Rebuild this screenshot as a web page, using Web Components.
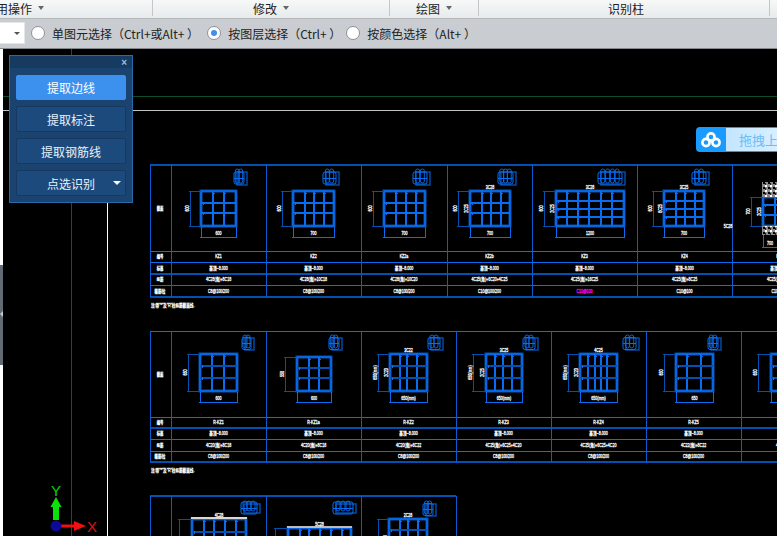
<!DOCTYPE html>
<html lang="zh">
<head>
<meta charset="utf-8">
<title>识别柱</title>
<style>
    html, body { margin: 0; height: 100%; overflow: hidden; background: #000; }
    body { font-family: "Noto Sans CJK SC", "Liberation Sans", sans-serif; }
    app-shell { height: 536px; }
</style>
</head>
<body>
<app-shell>
    <ribbon-bar>
        <ribbon-group width="153" right="124" caret>常用操作</ribbon-group>
        <ribbon-group width="237" caret>修改</ribbon-group>
        <ribbon-group width="89" caret>绘图</ribbon-group>
        <ribbon-group width="291" left="4">识别柱</ribbon-group>
    </ribbon-bar>
    <select-bar>
        <radio-option after="8">单图元选择（Ctrl+或Alt+ ）</radio-option>
        <radio-option after="5" checked>按图层选择（Ctrl+ ）</radio-option>
        <radio-option>按颜色选择（Alt+ ）</radio-option>
    </select-bar>
    <cad-canvas>
        <extract-panel slot="over">
            <panel-button active>提取边线</panel-button>
            <panel-button>提取标注</panel-button>
            <panel-button>提取钢筋线</panel-button>
            <panel-button caret>点选识别</panel-button>
        </extract-panel>
        <upload-pill slot="over">拖拽上传</upload-pill>
        <axis-gizmo slot="over"></axis-gizmo>
    </cad-canvas>
</app-shell>

<script>
class AppShell extends HTMLElement {
    constructor() {
        super();
        this.attachShadow({mode: 'open'});
        this.shadowRoot.innerHTML = `
            <style>
                :host { display: flex; flex-direction: column; width: 777px; overflow: hidden; }
            </style>
            <slot></slot>
        `;
    }
}

class RibbonBar extends HTMLElement {
    constructor() {
        super();
        this.attachShadow({mode: 'open'});
        this.shadowRoot.innerHTML = `
            <style>
                :host {
                    display: flex;
                    flex: none;
                    height: 19px;
                    background: linear-gradient(#f7f8f8, #e6eaeb);
                    box-shadow: inset 0 -1px 0 #b4b8bb;
                }
            </style>
            <slot></slot>
        `;
    }
}

class RibbonGroup extends HTMLElement {
    constructor() {
        super();
        this.attachShadow({mode: 'open'});
        const caret = this.hasAttribute('caret') ? '<i></i>' : '';
        this.shadowRoot.innerHTML = `
            <style>
                :host {
                    display: flex;
                    flex: none;
                    box-sizing: border-box;
                    align-items: center;
                    justify-content: center;
                    gap: 6px;
                    height: 16px;
                    width: ${this.getAttribute('width')}px;
                    padding-right: ${this.getAttribute('right') || 0}px;
                    padding-left: ${this.getAttribute('left') || 0}px;
                    border-right: 1px solid #c3c7c9;
                    color: #222;
                    font-size: 12px;
                    white-space: nowrap;
                }
                i {
                    width: 0;
                    height: 0;
                    border: 3.5px solid transparent;
                    border-top: 4px solid #666;
                    border-bottom: 0;
                }
            </style>
            <slot></slot>${caret}
        `;
    }
}

class SelectBar extends HTMLElement {
    constructor() {
        super();
        this.attachShadow({mode: 'open'});
        this.shadowRoot.innerHTML = `
            <style>
                :host {
                    display: flex;
                    flex: none;
                    box-sizing: border-box;
                    align-items: center;
                    height: 30px;
                    padding-bottom: 1px;
                    background: #c9ccd0;
                    border-bottom: 1px solid #85888c;
                }
                .combo {
                    position: relative;
                    flex: none;
                    box-sizing: border-box;
                    width: 25px;
                    height: 22px;
                    margin-right: 6px;
                    background: #fff;
                    border: 1px solid #e4e6e8;
                    border-left: 0;
                }
                .combo::after {
                    content: '';
                    position: absolute;
                    left: 14px;
                    top: 9px;
                    border: 3px solid transparent;
                    border-top: 3px solid #555;
                    border-bottom: 0;
                }
            </style>
            <div class="combo"></div>
            <slot></slot>
        `;
    }
}

class RadioOption extends HTMLElement {
    constructor() {
        super();
        this.attachShadow({mode: 'open'});
        const dot = this.hasAttribute('checked') ? '<b></b>' : '';
        this.shadowRoot.innerHTML = `
            <style>
                :host {
                    display: flex;
                    align-items: center;
                    gap: 7px;
                    margin-right: ${this.getAttribute('after') || 0}px;
                    color: #222;
                    font-size: 12px;
                    white-space: pre;
                }
                span {
                    display: flex;
                    flex: none;
                    box-sizing: border-box;
                    align-items: center;
                    justify-content: center;
                    width: 14px;
                    height: 14px;
                    background: #fff;
                    border: 1px solid #8f9396;
                    border-radius: 50%;
                }
                b {
                    width: 6px;
                    height: 6px;
                    background: #3f8ef0;
                    border-radius: 50%;
                }
            </style>
            <span>${dot}</span>
            <div><slot></slot></div>
        `;
    }
}

// the drawing is a free canvas: every entity sits at its own coordinates
const BLUE = '#0a6cf0';
const DARK = '#0450b0';
const RULE = '#0a5cd0';
const CJK = "'Liberation Sans','Noto Sans CJK SC',sans-serif";

function line(x1, y1, x2, y2, color = BLUE, w = 1) {
    return `<line x1="${x1}" y1="${y1}" x2="${x2}" y2="${y2}" stroke="${color}" stroke-width="${w}" shape-rendering="crispEdges"/>`;
}

// CAD text is narrow and heavy, so the glyphs are squeezed sideways
function label(x, y, text, opts = {}) {
    const rot = opts.rot ? ' rotate(-90)' : '';
    const color = opts.color || '#fff';
    return `<text transform="translate(${x} ${y})${rot} scale(.72 1)" dy="1.8" text-anchor="${opts.anchor || 'middle'}" fill="${color}"
        stroke="${color}" stroke-width="0.3" font-size="${opts.size || 5}" font-family="${CJK}">${text}</text>`;
}

function mini(x1, y1, x2, y2) {
    const midY = (y1 + y2) / 2 + 1;
    const h = Math.min(y2 - y1, 12);
    const n = Math.max(1, Math.round((x2 - x1) / 7));
    let out = `<rect x="${x1 + 3}" y="${y1 + 3}" width="${x2 - x1 - 3}" height="${y2 - y1 - 3}" fill="none" stroke="${DARK}" stroke-width="1.4"/>`;
    out += `<rect x="${x1}" y="${midY - h / 2}" width="${x2 - x1 - 3}" height="${h}" rx="2" fill="none" stroke="${BLUE}"/>`;
    out += line(x1, midY, x2 - 3, midY);
    for (let i = 1; i <= n; i++) {
        const x = x1 + i * (x2 - x1 - 3) / (n + 1);
        out += `<rect x="${x - 2}" y="${y1}" width="4" height="${y2 - y1 - 2}" rx="2" fill="none" stroke="${BLUE}" stroke-width="0.9"/>`;
    }
    return out;
}

// s: x1 x2 y1 y2 of the column section, vs hs the inner bars, dim the x of the left dimension
function section(s) {
    const base = s.base;
    let out = `<rect x="${s.x1}" y="${s.y1}" width="${s.x2 - s.x1}" height="${s.y2 - s.y1}" fill="none" stroke="${DARK}" stroke-width="3"/>`;
    out += `<rect x="${s.x1}" y="${s.y1}" width="${s.x2 - s.x1}" height="${s.y2 - s.y1}" rx="1" fill="none" stroke="${BLUE}" stroke-width="1.6"/>`;
    if (s.top) out += line(s.x1 - 1, s.y1 - 1, s.x2 + 1, s.y1 - 1, s.top, 1.5);
    for (const x of s.vs) {
        out += line(x, s.y1, x, Math.min(s.y2, 536), BLUE, 1.4);
        out += line(x - 1, s.y1 + 2, x + 2, s.y1 + 2, BLUE, 1);
    }
    for (const y of s.hs) {
        out += line(s.x1, y, s.x2, y, y % 2 ? BLUE : DARK, 1.6);
        out += line(s.x1 + 2, y - 1, s.x1 + 2, y + 2, BLUE, 1);
    }
    out += line(s.dim, s.y1, s.dim, Math.min(s.y2, 536), DARK, 1);
    out += line(s.dim - 1, s.y1, s.x1, s.y1, DARK, 1);
    out += line(s.dim - 1, s.y2, s.x1, s.y2, DARK, 1);
    if (s.y2 < 500) {
        out += line(s.x1, s.y2 + 1, s.x1, base + 1, BLUE, 1);
        out += line(s.x2, s.y2 + 1, s.x2, base + 1, BLUE, 1);
        out += line(s.x1 - 1, base, s.x2 + 1, base, BLUE, 1);
        if (s.bw) out += label((s.x1 + s.x2) / 2, base - 4, s.bw);
        out += label(s.dim - 3, (s.y1 + s.y2) / 2, s.bh, {rot: true});
    }
    if (s.topText) out += label((s.x1 + s.x2) / 2, s.y1 - 4, s.topText);
    if (s.sideText) out += label(s.x1 - 4, (s.y1 + s.y2) / 2, s.sideText, {rot: true});
    return out;
}

function table(t) {
    const [top, r1, r2, r3, r4, bottom] = t.rows;
    const right = t.right;
    let out = '';
    out += t.thin ? line(t.cols[0], top, right, top, BLUE, 1) : line(t.cols[0], top, right, top, DARK, 2);
    [r1, r2, r3, r4].forEach((y, i) => {
        out += line(t.cols[0], y, right, y, i === t.heavy ? DARK : BLUE, i === t.heavy ? 2 : 1);
    });
    out += line(t.cols[0], bottom, right, bottom, DARK, 2);
    for (const x of t.cols) out += line(x, top, x, bottom, RULE, 1);

    const heads = ['截面', '编号', '标高', '纵筋', '箍筋/拉'];
    const mids = [(top + r1) / 2, (r1 + r2) / 2, (r2 + r3) / 2, (r3 + r4) / 2, (r4 + bottom) / 2];
    heads.forEach((h, i) => { out += label(160, mids[i], h, {size: 4.6}); });

    t.data.forEach((d, i) => {
        const c = (t.cols[i + 1] + (t.cols[i + 2] || t.cols[i + 1] + 95)) / 2;
        out += label(c, mids[1], d[0]);
        out += label(c, mids[2], d[1] || '基顶~8.000');
        out += label(c, mids[3], d[2]);
        out += label(c, mids[4], d[3], {color: d[4] || '#fff'});
    });
    return out;
}

const T1 = {
    rows: [165, 251, 262, 274, 285, 297], heavy: 2, right: 787,
    cols: [150, 171, 266, 361, 447, 532, 637, 732],
    data: [
        ['KZ1', '', '4C28(角)+8C18', 'C8@100/200'],
        ['KZ2', '', '4C28(角)+10C18', 'C8@100/200'],
        ['KZ2a', '', '4C28(角)+10C20', 'C8@100/200'],
        ['KZ2b', '', '4C25(角)+6C20+4C25', 'C10@100/200'],
        ['KZ3', '', '4C25(角)+16C25', 'C10@100', '#f0f'],
        ['KZ4', '', '4C25(角)+8C25', 'C10@100'],
        ['KZ5', '', '4C25(角)+8C25', 'C10@100']
    ]
};

const T2 = {
    rows: [331, 417, 428, 439, 451, 462], heavy: 1, right: 787, thin: true,
    cols: [150, 171, 266, 361, 456, 551, 646, 741],
    data: [
        ['R-KZ1', '', '4C20(角)+8C18', 'C8@100/200'],
        ['R-KZ1a', '', '4C20(角)+8C18', 'C8@100/200'],
        ['R-KZ2', '', '4C20(角)+6C22', 'C8@100/200'],
        ['R-KZ3', '', '4C25(角)+6C25+4C20', 'C8@100/200'],
        ['R-KZ4', '', '4C25(角)+6C25+4C20', 'C8@100/200'],
        ['R-KZ5', '', '4C22(角)+8C22', 'C8@100/200'],
        ['R-KZ6', '', '4C22(角)+8C22', 'C8@100/200']
    ]
};

const ROW1 = {y1: 191, y2: 226, base: 237, hs: [203, 213]};
const ROW2 = {y1: 354, y2: 391, base: 402, hs: [366, 378]};

const SECTIONS = [
    {...ROW1, x1: 201, x2: 236, dim: 190, vs: [213, 224], bw: '600', bh: '600'},
    {...ROW1, x1: 293, x2: 334, dim: 282, vs: [305, 314, 324], bw: '700', bh: '600'},
    {...ROW1, x1: 384, x2: 425, dim: 373, vs: [396, 406, 416], bw: '700', bh: '600'},
    {...ROW1, x1: 470, x2: 510, dim: 458, vs: [482, 491, 501], bw: '700', bh: '600', topText: '3C28', sideText: '2C25'},
    {...ROW1, hs: [201, 209, 217], x1: 556, x2: 624, dim: 544, vs: [567, 578, 589, 601, 612], bw: '1200', bh: '600', topText: '3C28', sideText: '2C25'},
    {...ROW1, hs: [201, 209, 217], x1: 664, x2: 704, dim: 653, vs: [676, 685, 695], bw: '700', bh: '600', topText: '3C25', sideText: '6C25'},
    {...ROW1, hs: [205, 215], y1: 197, x1: 763, x2: 800, dim: 751, vs: [775], base: 247, bh: '700', sideText: '2C25'},
    {...ROW2, x1: 200, x2: 237, dim: 188, vs: [212, 224], bw: '600', bh: '650'},
    {...ROW2, y1: 357, hs: [368, 378], x1: 297, x2: 331, dim: 285, vs: [309, 319], bw: '600', bh: '550'},
    {...ROW2, x1: 390, x2: 427, dim: 378, vs: [400, 407, 417], bw: '650(mm)', bh: '650(mm)', topText: '3C22', sideText: '2C20'},
    {...ROW2, x1: 486, x2: 522, dim: 473, vs: [495, 503, 512], bw: '650(mm)', bh: '650(mm)', topText: '3C25', sideText: '2C25'},
    {...ROW2, x1: 580, x2: 617, dim: 568, vs: [588, 595, 601, 607], bw: '650(mm)', bh: '650(mm)', topText: '4C25', sideText: '2C20'},
    {...ROW2, x1: 676, x2: 713, dim: 664, vs: [687, 701], bw: '650', bh: '650'},
    {...ROW2, x1: 771, x2: 810, dim: 758, vs: [784], bw: '650', bh: '650'},
    {y1: 519, y2: 560, base: 570, hs: [532], x1: 192, x2: 246, dim: 179, vs: [204, 214, 225, 236], topText: '4C28', top: '#d8d8d8'},
    {y1: 528, y2: 570, base: 580, hs: [], x1: 288, x2: 351, dim: 275, vs: [300, 309, 320, 331, 342], topText: '5C28', top: '#bcbcbc'},
    {y1: 519, y2: 560, base: 570, hs: [530], x1: 389, x2: 427, dim: 378, vs: [400, 408, 418], topText: '2C28', sideText: '2C20'}
];

const MINIS = [
    [234, 169, 247, 185], [323, 169, 339, 185], [413, 169, 430, 185], [498, 169, 516, 185],
    [598, 169, 625, 185], [692, 169, 709, 185],
    [242, 335, 254, 350], [329, 335, 342, 350], [428, 335, 443, 350], [523, 335, 538, 350],
    [623, 335, 639, 350], [708, 335, 721, 350],
    [241, 501, 260, 513], [333, 501, 356, 513], [423, 501, 436, 516]
];

function drawing() {
    let out = '';
    out += line(71, 49, 71, 536, '#0f5532', 1);
    out += line(0, 96, 777, 96, '#0d4d2c', 1);
    out += line(0, 110, 777, 110, '#c4c4c4', 1);
    out += line(107, 110, 107, 536, '#fff', 1);

    out += table(T1) + table(T2);
    out += label(151, 305, '注:带"*"及"R"柱纵筋截面线.', {anchor: 'start'});
    out += label(151, 470, '注:带"*"及"R"柱纵筋截面线.', {anchor: 'start'});

    out += line(150, 496, 456, 496, DARK, 2);
    for (const x of [150, 171, 266, 361, 456]) out += line(x, 496, x, 536, RULE, 1);

    out += SECTIONS.map(section).join('') + MINIS.map(m => mini(...m)).join('');

    // hatched end blocks of the L shaped column at the right edge
    out += `<rect x="762" y="182" width="20" height="15" fill="url(#hatch)"/>`;
    out += `<rect x="762" y="226" width="20" height="9" fill="url(#hatch)"/>`;
    out += line(762, 247, 790, 247, BLUE);
    out += label(728, 226, '5C28');
    out += label(770, 243, '700');
    return out;
}

class CadCanvas extends HTMLElement {
    constructor() {
        super();
        this.attachShadow({mode: 'open'});
        this.shadowRoot.innerHTML = `
            <style>
                :host {
                    display: block;
                    position: relative;
                    flex: 1;
                    min-height: 0;
                    background: #000;
                    overflow: hidden;
                }
                svg { display: block; }
                .edge {
                    position: absolute;
                    left: 0;
                    top: 0;
                    bottom: 0;
                    width: 3px;
                    background: #fff;
                }
                .grip {
                    position: absolute;
                    left: 0;
                    top: 216px;
                    width: 3px;
                    height: 100px;
                    background: #626a74;
                }
                .grip::after {
                    content: '';
                    position: absolute;
                    left: 0;
                    top: 46px;
                    border: 3px solid transparent;
                    border-left: 0;
                    border-right: 3px solid #c4c8cc;
                }
            </style>
            <svg width="777" height="487" viewBox="0 49 777 487">
                <defs>
                    <pattern id="hatch" width="5" height="5" patternUnits="userSpaceOnUse">
                        <rect width="5" height="5" fill="#8a8a8a"/>
                        <rect width="2" height="2" fill="#fff"/>
                        <rect x="3" y="2" width="2" height="2" fill="#000"/>
                        <rect y="3" width="1" height="2" fill="#222"/>
                    </pattern>
                </defs>
                ${drawing()}
            </svg>
            <div class="edge"></div>
            <div class="grip"></div>
            <slot name="over"></slot>
        `;
    }
}

class ExtractPanel extends HTMLElement {
    constructor() {
        super();
        this.attachShadow({mode: 'open'});
        this.shadowRoot.innerHTML = `
            <style>
                :host {
                    position: absolute;
                    left: 9px;
                    top: 6px;
                    box-sizing: border-box;
                    width: 124px;
                    height: 148px;
                    background: #1b4370;
                    border: 1px solid #2a6aa8;
                }
                header {
                    display: flex;
                    align-items: center;
                    justify-content: flex-end;
                    height: 12px;
                    padding-right: 5px;
                    background: #173a61;
                    color: #8fc0ee;
                    font: bold 10px "Liberation Sans", sans-serif;
                }
                .list {
                    display: flex;
                    flex-direction: column;
                    gap: 6px;
                    padding: 7px 6px;
                }
            </style>
            <header>×</header>
            <div class="list"><slot></slot></div>
        `;
    }
}

class PanelButton extends HTMLElement {
    constructor() {
        super();
        this.attachShadow({mode: 'open'});
        const caret = this.hasAttribute('caret') ? '<i></i>' : '';
        this.shadowRoot.innerHTML = `
            <style>
                :host {
                    display: flex;
                    position: relative;
                    box-sizing: border-box;
                    align-items: center;
                    justify-content: center;
                    height: 26px;
                    background: #1d4a7d;
                    border: 1px solid #18395f;
                    border-radius: 2px;
                    color: #e8f2fb;
                    font-size: 12px;
                }
                :host([active]) {
                    height: 25px;
                    background: #3d91ee;
                    border-color: #3d91ee;
                    color: #fff;
                }
                i {
                    position: absolute;
                    right: 4px;
                    top: 10px;
                    border: 4px solid transparent;
                    border-top: 4px solid #fff;
                    border-bottom: 0;
                }
            </style>
            <slot></slot>${caret}
        `;
    }
}

class UploadPill extends HTMLElement {
    constructor() {
        super();
        this.attachShadow({mode: 'open'});
        this.shadowRoot.innerHTML = `
            <style>
                :host {
                    display: flex;
                    position: absolute;
                    left: 696px;
                    top: 78px;
                    width: 110px;
                    height: 25px;
                    background: #1a9bff;
                    border-radius: 4px;
                    overflow: hidden;
                }
                .logo {
                    display: flex;
                    flex: none;
                    align-items: center;
                    justify-content: center;
                    width: 30px;
                }
                .text {
                    flex: 1;
                    margin: 1px 0;
                    padding-left: 13px;
                    background: linear-gradient(90deg, #c4e6ff, #e2f3ff);
                    color: #6dbcf6;
                    font-size: 13px;
                    line-height: 23px;
                    white-space: nowrap;
                }
            </style>
            <div class="logo">
                <svg width="20" height="16" viewBox="0 0 20 16" fill="none" stroke="#fff" stroke-width="2.6">
                    <circle cx="10" cy="5" r="3.6"/>
                    <circle cx="5" cy="10.5" r="3.6"/>
                    <circle cx="15" cy="10.5" r="3.6"/>
                </svg>
            </div>
            <div class="text"><slot></slot></div>
        `;
    }
}

class AxisGizmo extends HTMLElement {
    constructor() {
        super();
        this.attachShadow({mode: 'open'});
        this.shadowRoot.innerHTML = `
            <style>
                :host {
                    position: absolute;
                    left: 44px;
                    top: 431px;
                    width: 56px;
                    height: 56px;
                }
                text { font: 15px "Liberation Sans", sans-serif; }
            </style>
            <svg width="56" height="56" viewBox="44 480 56 56">
                <path d="M53 520V507H50.500L56 497L61.500 507H59V520Z" fill="#0be00b"/>
                <path d="M61 524.500H74V521L86 526L74 531V527.500H61Z" fill="#f01010"/>
                <circle cx="56" cy="526" r="5.500" fill="#0a0a96"/>
                <text x="56" y="496" text-anchor="middle" fill="#0bd00b">Y</text>
                <text x="92" y="532" text-anchor="middle" fill="#e01010">X</text>
            </svg>
        `;
    }
}

customElements.define('app-shell', AppShell);
customElements.define('ribbon-bar', RibbonBar);
customElements.define('ribbon-group', RibbonGroup);
customElements.define('select-bar', SelectBar);
customElements.define('radio-option', RadioOption);
customElements.define('cad-canvas', CadCanvas);
customElements.define('extract-panel', ExtractPanel);
customElements.define('panel-button', PanelButton);
customElements.define('upload-pill', UploadPill);
customElements.define('axis-gizmo', AxisGizmo);
</script>
</body>
</html>
